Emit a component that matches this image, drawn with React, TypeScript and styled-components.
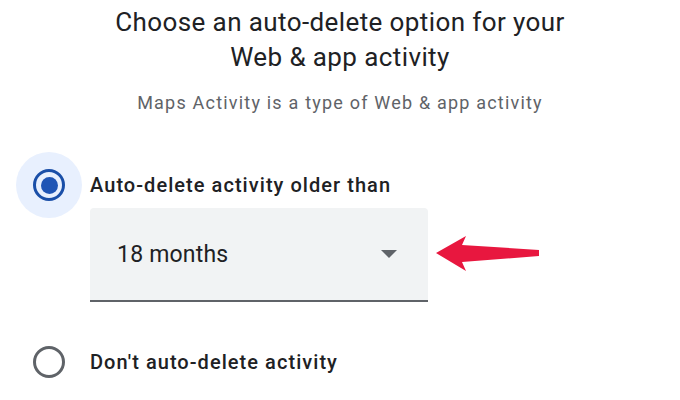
import React from "react";
import styled, { createGlobalStyle } from "styled-components";

const Global = createGlobalStyle`
  html, body { margin: 0; padding: 0; background: #ffffff; }
  body { width: 680px; height: 400px; overflow: hidden; font-family: Roboto, "Noto Sans", sans-serif; }
`;

const Page = styled.div`
  width: 680px;
  height: 400px;
  box-sizing: border-box;
  padding-top: 5px;
  display: flex;
  flex-direction: column;
`;

const Title = styled.h1`
  margin: 0;
  text-align: center;
  font-family: Roboto, "Noto Sans", sans-serif;
  font-weight: 400;
  font-size: 26px;
  line-height: 35px;
  color: #202124;
  letter-spacing: 0.4px;
`;

const Subtitle = styled.p`
  margin: 17px 0 0;
  text-align: center;
  font-size: 18px;
  line-height: 22px;
  color: #5f6368;
  letter-spacing: 1.2px;
`;

const Options = styled.div`
  margin-top: 38px;
  display: flex;
  flex-direction: column;
`;

const OptionRow = styled.div<{ $gap?: number }>`
  display: grid;
  grid-template-columns: 90px 1fr;
  align-items: start;
  margin-top: ${(p) => p.$gap ?? 0}px;
`;

const RadioCell = styled.div`
  width: 66px;
  height: 66px;
  margin-left: 16px;
  display: flex;
  align-items: center;
  justify-content: center;
`;

const Halo = styled.div<{ $on: boolean }>`
  width: 66px;
  height: 66px;
  border-radius: 50%;
  background: ${(p) => (p.$on ? "#e8f0fe" : "transparent")};
  display: flex;
  align-items: center;
  justify-content: center;
`;

const Ring = styled.div<{ $on: boolean }>`
  width: 26px;
  height: 26px;
  border-radius: 50%;
  border: 3.5px solid ${(p) => (p.$on ? "#1a4fa8" : "#5f6368")};
  display: flex;
  align-items: center;
  justify-content: center;
`;

const Dot = styled.div`
  width: 17px;
  height: 17px;
  border-radius: 50%;
  background: #1f55b5;
`;

const Body = styled.div`
  display: flex;
  flex-direction: column;
`;

const Label = styled.div`
  font-size: 20px;
  line-height: 66px;
  height: 66px;
  color: #202124;
  font-weight: 500;
  letter-spacing: 1.05px;
`;

const SelectRow = styled.div`
  display: flex;
  align-items: center;
  gap: 8px;
  margin-top: -10px;
`;

const Select = styled.div`
  width: 338px;
  height: 94px;
  box-sizing: border-box;
  background: #f1f3f4;
  border-radius: 4px 4px 0 0;
  border-bottom: 2px solid #5f6368;
  display: flex;
  align-items: center;
  padding: 0 31px 0 27px;
`;

const SelectText = styled.span`
  flex: 1;
  font-size: 23px;
  color: #202124;
  letter-spacing: 0.2px;
`;

const Caret = styled.span`
  width: 0;
  height: 0;
  border-left: 8px solid transparent;
  border-right: 8px solid transparent;
  border-top: 8px solid #5f6368;
`;

const Pointer = () => (
  <svg width="104" height="38" viewBox="0 0 104 38">
    <polygon
      points="0,17 30,0 26,9 103,14 103,20 26,26 30,35"
      fill="#e8173f"
    />
  </svg>
);

export default function App() {
  return (
    <Page>
      <Global />
      <Title>
        Choose an auto-delete option for your
        <br />
        Web &amp; app activity
      </Title>
      <Subtitle>Maps Activity is a type of Web &amp; app activity</Subtitle>
      <Options>
        <OptionRow>
          <RadioCell>
            <Halo $on>
              <Ring $on>
                <Dot />
              </Ring>
            </Halo>
          </RadioCell>
          <Body>
            <Label>Auto-delete activity older than</Label>
            <SelectRow>
              <Select>
                <SelectText>18 months</SelectText>
                <Caret />
              </Select>
              <Pointer />
            </SelectRow>
          </Body>
        </OptionRow>
        <OptionRow $gap={27}>
          <RadioCell>
            <Halo $on={false}>
              <Ring $on={false} />
            </Halo>
          </RadioCell>
          <Body>
            <Label>Don't auto-delete activity</Label>
          </Body>
        </OptionRow>
      </Options>
    </Page>
  );
}
